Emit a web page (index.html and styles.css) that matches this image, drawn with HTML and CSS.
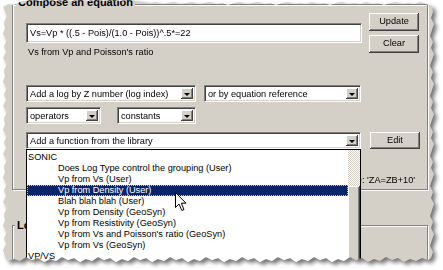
FILE: index.html
```html
<!DOCTYPE html>
<html lang="en">
<head>
  <meta charset="UTF-8">
  <title>Compose an equation</title>
  <link rel="stylesheet" href="styles.css">
</head>
<body>
  <div class="sheet">
    <div class="paper">

      <div class="group group-compose">
        <span class="legend">Compose an equation</span>

        <div class="eq-row">
          <div class="eq-main">
            <div class="textbox">Vs=Vp * ((.5 - Pois)/(1.0 - Pois))^.5*=22</div>
            <div class="desc">Vs from Vp and Poisson's ratio</div>
          </div>
          <div class="btn-col">
            <div class="btn">Update</div>
            <div class="btn">Clear</div>
          </div>
        </div>

        <div class="combo-row row-logs">
          <div class="combo w-log"><span class="combo-text">Add a log by Z number (log index)</span><span class="arrow"></span></div>
          <div class="combo w-ref"><span class="combo-text">or by equation reference</span><span class="arrow"></span></div>
        </div>

        <div class="combo-row row-ops">
          <div class="combo w-ops"><span class="combo-text">operators</span><span class="arrow"></span></div>
          <div class="combo w-const"><span class="combo-text">constants</span><span class="arrow"></span></div>
        </div>

        <div class="combo-row row-func">
          <div class="combo-wrap">
            <div class="combo w-func"><span class="combo-text">Add a function from the library</span><span class="arrow"></span></div>

            <!-- open drop-down list -->
            <div class="droplist">
              <div class="items">
                <div class="item">SONIC</div>
                <div class="item sub">Does Log Type control the grouping (User)</div>
                <div class="item sub">Vp from Vs (User)</div>
                <div class="item sub selected">Vp from Density (User)</div>
                <div class="item sub">Blah blah blah (User)</div>
                <div class="item sub">Vp from Density (GeoSyn)</div>
                <div class="item sub">Vp from Resistivity (GeoSyn)</div>
                <div class="item sub">Vp from Vs and Poisson's ratio (GeoSyn)</div>
                <div class="item sub">Vp from Vs (GeoSyn)</div>
                <div class="item">VP/VS</div>
              </div>
              <div class="scrollbar">
                <div class="track"></div>
                <div class="thumb"></div>
              </div>
            </div>
          </div>
          <div class="btn btn-edit">Edit</div>
        </div>

        <div class="hint">Example: 'ZA=ZB+10'</div>
      </div>

      <div class="group group-logs">
        <span class="legend">Logs</span>
      </div>

      <svg class="cursor" width="14" height="20" viewBox="0 0 14 20">
        <path d="M0.5 0.5 L0.5 15.5 L4 12 L6.8 18.5 L9 17.5 L6.3 11.2 L11 11.2 Z" fill="#fff" stroke="#000" stroke-width="1" stroke-linejoin="miter"/>
      </svg>
    </div>
  </div>
</body>
</html>
```

FILE: styles.css
```css
html, body {
  margin: 0;
  padding: 0;
}
body {
  background: #fff;
  font-family: "Liberation Sans", Arial, sans-serif;
  font-size: 9.2px;
  color: #000;
}

/* torn screenshot with a soft shadow */
.sheet {
  width: 443px;
  height: 270px;
  filter: drop-shadow(3px 3px 2px rgba(0, 0, 0, 0.55));
}
.paper {
  position: relative;
  width: 443px;
  height: 270px;
  box-sizing: border-box;
  padding: 4px 0 0 12px;
  background: #d4d0c8;
  overflow: hidden;
  clip-path: polygon(
    3px 7px, 8px 4px, 14px 5px, 20px 2px, 26px 1px, 32px 0px, 40px 1px, 48px 0px, 56px 1px, 64px 0px,
    72px 1px, 80px 0px, 88px 1px, 96px 0px, 104px 1px, 112px 0px, 120px 1px, 128px 0px, 136px 1px, 144px 2px,
    150px 3px, 156px 2px, 162px 4px, 168px 3px, 174px 2px, 180px 4px, 186px 3px, 192px 2px, 198px 4px, 204px 3px,
    210px 2px, 216px 4px, 222px 3px, 228px 5px, 234px 3px, 240px 2px, 246px 4px, 252px 3px, 258px 2px, 264px 4px,
    270px 3px, 276px 5px, 282px 3px, 288px 2px, 294px 4px, 300px 3px, 306px 4px, 312px 2px, 318px 4px, 324px 3px,
    330px 5px, 336px 3px, 342px 2px, 348px 4px, 354px 3px, 360px 4px, 366px 2px, 372px 4px, 378px 3px, 384px 5px,
    390px 3px, 396px 2px, 402px 4px, 408px 3px, 414px 4px, 420px 2px, 426px 4px, 432px 6px,
    433px 12px, 431px 18px, 434px 24px, 432px 30px, 430px 36px, 433px 42px, 431px 48px, 434px 54px, 432px 60px,
    430px 66px, 433px 72px, 431px 78px, 434px 84px, 432px 90px, 430px 96px, 433px 102px, 431px 108px, 434px 114px,
    432px 120px, 430px 126px, 433px 132px, 431px 138px, 434px 144px, 432px 150px, 430px 156px, 433px 162px,
    431px 168px, 434px 174px, 432px 180px, 430px 186px, 433px 192px, 431px 198px, 434px 204px, 432px 210px,
    430px 216px, 433px 222px, 431px 228px, 434px 234px, 432px 240px, 430px 246px, 433px 252px, 431px 258px,
    428px 260px, 422px 258px, 416px 261px, 410px 259px, 404px 262px, 398px 258px, 392px 260px, 386px 257px,
    380px 261px, 374px 259px, 368px 262px, 362px 258px, 356px 260px, 350px 257px, 344px 261px, 338px 259px,
    332px 262px, 326px 258px, 320px 260px, 314px 257px, 308px 261px, 302px 259px, 296px 262px, 290px 258px,
    284px 260px, 278px 257px, 272px 261px, 266px 259px, 260px 262px, 254px 258px, 248px 260px, 242px 257px,
    236px 261px, 230px 259px, 224px 262px, 218px 258px, 212px 260px, 206px 257px, 200px 261px, 194px 259px,
    188px 262px, 182px 258px, 176px 260px, 170px 257px, 164px 261px, 158px 259px, 152px 262px, 146px 258px,
    140px 260px, 134px 257px, 128px 261px, 122px 259px, 116px 262px, 110px 258px, 104px 260px, 98px 257px,
    92px 261px, 86px 259px, 80px 262px, 74px 258px, 68px 260px, 62px 257px, 56px 261px, 50px 259px,
    44px 262px, 38px 258px, 32px 260px, 26px 257px, 20px 261px, 14px 259px, 8px 261px,
    5px 256px, 3px 250px, 6px 244px, 4px 238px, 7px 232px, 3px 226px, 5px 220px, 4px 214px, 7px 208px,
    3px 202px, 6px 196px, 4px 190px, 7px 184px, 3px 178px, 5px 172px, 4px 166px, 7px 160px, 3px 154px,
    6px 148px, 4px 142px, 7px 136px, 3px 130px, 5px 124px, 4px 118px, 7px 112px, 3px 106px, 6px 100px,
    4px 94px, 7px 88px, 3px 82px, 5px 76px, 4px 70px, 7px 64px, 3px 58px, 6px 52px, 4px 46px, 7px 40px,
    3px 34px, 5px 28px, 4px 22px, 7px 16px, 5px 11px
  );
}

/* etched group boxes */
.group {
  position: relative;
  box-sizing: border-box;
  width: 416px;
  border: 1px solid #808080;
  box-shadow: inset 1px 1px 0 #fff, 1px 1px 0 #fff;
}
.group-compose {
  height: 186px;
  padding: 8px 7px 0 13px;
}
.group-logs {
  height: 80px;
  margin-top: 35px;
}
.legend {
  position: absolute;
  top: -9px;
  left: 3px;
  padding: 0 2px;
  background: #d4d0c8;
  font-size: 11px;
  font-weight: bold;
  line-height: 12px;
}
.group-logs .legend {
  top: -7px;
  left: 2px;
}

/* 3d edges */
.btn, .arrow, .thumb {
  background: #d4d0c8;
  box-shadow: inset -1px -1px 0 #404040, inset 1px 1px 0 #fff, inset -2px -2px 0 #808080;
}
.textbox, .combo {
  box-sizing: border-box;
  background: #fff;
  border-top: 1px solid #808080;
  border-left: 1px solid #808080;
  border-bottom: 1px solid #fff;
  border-right: 1px solid #fff;
  box-shadow: inset 1px 1px 0 #404040, inset -1px -1px 0 #d4d0c8;
}

.eq-row {
  display: flex;
  align-items: flex-start;
}
.eq-main {
  width: 336px;
  margin-top: 10px;
}
.textbox {
  height: 20px;
  padding: 0 3px;
  line-height: 18px;
  white-space: nowrap;
}
.desc {
  margin-top: 3px;
  padding-left: 2px;
  line-height: 12px;
}
.btn-col {
  display: flex;
  flex-direction: column;
  gap: 4px;
  margin-left: 7px;
}
.btn {
  box-sizing: border-box;
  width: 50px;
  height: 18px;
  line-height: 17px;
  text-align: center;
}

/* combo boxes */
.combo-row {
  display: flex;
  align-items: flex-start;
}
.row-logs {
  margin-top: 27px;
  gap: 8px;
}
.row-ops {
  margin-top: 5px;
  gap: 16px;
}
.row-func {
  margin-top: 8px;
  gap: 9px;
}
.combo {
  display: flex;
  align-items: stretch;
  height: 17px;
  padding: 2px;
}
.combo-text {
  flex: 1;
  padding-left: 1px;
  line-height: 13px;
  white-space: nowrap;
  overflow: hidden;
}
.arrow {
  position: relative;
  width: 12px;
}
.arrow::after {
  content: "";
  position: absolute;
  left: 3px;
  top: 5px;
  border-left: 3px solid transparent;
  border-right: 3px solid transparent;
  border-top: 3px solid #000;
}
.w-log { width: 170px; }
.w-ref { width: 157px; }
.w-ops { width: 75px; }
.w-const { width: 79px; }
.w-func { width: 335px; }
.btn-edit {
  height: 17px;
  line-height: 16px;
}

.combo-wrap {
  position: relative;
}

/* open drop-down list */
.droplist {
  position: absolute;
  top: 100%;
  left: 0;
  z-index: 5;
  box-sizing: border-box;
  width: 335px;
  height: 120px;
  display: flex;
  background: #fff;
  border: 1px solid #000;
  overflow: hidden;
}
.items {
  flex: 1;
  padding-top: 2px;
}
.item {
  height: 11px;
  line-height: 11px;
  padding-left: 1px;
  white-space: nowrap;
}
.item.sub {
  padding-left: 31px;
}
.item.selected {
  background: #0a246a;
  color: #fff;
  outline: 1px dotted #d8c870;
  outline-offset: -1px;
}
.scrollbar {
  width: 12px;
  display: flex;
  flex-direction: column;
}
.track {
  height: 36px;
  background: repeating-conic-gradient(#fff 0 25%, #d4d0c8 0 50%) 0 0 / 2px 2px;
}
.thumb {
  flex: 1;
}

.hint {
  margin-top: 25px;
  margin-right: 5px;
  text-align: right;
  line-height: 12px;
}

.cursor {
  position: absolute;
  left: 175px;
  top: 192px;
  z-index: 10;
}
```
